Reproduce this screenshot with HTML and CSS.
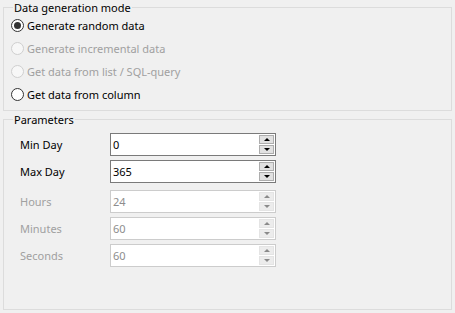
FILE: index.html
```html
<!DOCTYPE html>
<html>
<head>
<meta charset="utf-8">
<link rel="stylesheet" href="styles.css">
</head>
<body>
<div class="page">
  <fieldset class="group mode">
    <legend>Data generation mode</legend>
    <div class="radios">
      <label class="radio"><span class="dot checked"></span><span>Generate random data</span></label>
      <label class="radio disabled"><span class="dot"></span><span>Generate incremental data</span></label>
      <label class="radio disabled"><span class="dot"></span><span>Get data from list / SQL-query</span></label>
      <label class="radio"><span class="dot"></span><span>Get data from column</span></label>
    </div>
  </fieldset>
  <fieldset class="group params">
    <legend>Parameters</legend>
    <div class="rows">
      <div class="row"><span class="lbl">Min Day</span><div class="spin"><span class="val">0</span><div class="btns"><span class="btn up"></span><span class="btn down"></span></div></div></div>
      <div class="row"><span class="lbl">Max Day</span><div class="spin"><span class="val">365</span><div class="btns"><span class="btn up"></span><span class="btn down"></span></div></div></div>
      <div class="row disabled first-dis"><span class="lbl">Hours</span><div class="spin"><span class="val">24</span><div class="btns"><span class="btn up"></span><span class="btn down"></span></div></div></div>
      <div class="row disabled"><span class="lbl">Minutes</span><div class="spin"><span class="val">60</span><div class="btns"><span class="btn up"></span><span class="btn down"></span></div></div></div>
      <div class="row disabled"><span class="lbl">Seconds</span><div class="spin"><span class="val">60</span><div class="btns"><span class="btn up"></span><span class="btn down"></span></div></div></div>
    </div>
  </fieldset>
</div>
</body>
</html>
```
FILE: styles.css
```css
html, body {
  margin: 0;
  padding: 0;
  background: #f0f0f0;
}
body {
  font-family: "Noto Sans", "Open Sans", sans-serif;
  font-size: 11px;
  color: #000;
  width: 455px;
  height: 313px;
  overflow: hidden;
}
.page {
  padding: 0 3px 0 3px;
}
.group {
  margin: 0;
  padding: 0 0 0 7px;
  border: 1px solid #dcdcdc;
  min-width: 0;
}
.group legend {
  margin-left: 2px;
  padding: 0 1px;
  line-height: 15px;
  height: 15px;
}
.mode {
  height: 111px;
  box-sizing: border-box;
}
.params {
  margin-top: 1px;
  height: 198px;
  box-sizing: border-box;
}
.radios {
  display: flex;
  flex-direction: column;
  margin-top: -1px;
}
.radio {
  display: flex;
  align-items: center;
  height: 23px;
  gap: 3px;
}
.radio.disabled {
  color: #a0a0a0;
}
.dot {
  width: 13px;
  height: 13px;
  box-sizing: border-box;
  border: 1px solid #333;
  border-radius: 50%;
  background: #fff;
  display: flex;
  align-items: center;
  justify-content: center;
}
.dot.checked::after {
  content: "";
  width: 7px;
  height: 7px;
  border-radius: 50%;
  background: #333;
}
.radio.disabled .dot {
  border-color: #cfcfcf;
  background: #f7f7f7;
}
.rows {
  display: flex;
  flex-direction: column;
  gap: 4px;
  padding-top: 6px;
  padding-left: 9px;
}
.row {
  display: flex;
  align-items: center;
}
.row.first-dis {
  margin-top: 3px;
}
.lbl {
  width: 90px;
}
.row.disabled .lbl {
  color: #a0a0a0;
}
.spin {
  width: 166px;
  height: 23px;
  box-sizing: border-box;
  border: 1px solid #7a7a7a;
  background: #fff;
  display: flex;
  align-items: center;
  justify-content: space-between;
}
.row.disabled .spin {
  border-color: #cccccc;
}
.val {
  padding-left: 2px;
}
.row.disabled .val {
  color: #8d8d8d;
}
.btns {
  display: flex;
  flex-direction: column;
  gap: 1px;
  margin-right: 1px;
}
.btn {
  width: 15px;
  height: 9px;
  box-sizing: border-box;
  border: 1px solid #adadad;
  background: #e1e1e1;
  display: flex;
  align-items: center;
  justify-content: center;
}
.btn::after {
  content: "";
  width: 0;
  height: 0;
  border-left: 3px solid transparent;
  border-right: 3px solid transparent;
}
.btn.up::after {
  border-bottom: 3px solid #000;
}
.btn.down::after {
  border-top: 3px solid #000;
}
.row.disabled .btn {
  border-color: #e4e4e4;
  background: #ececec;
}
.row.disabled .btn.up::after {
  border-bottom-color: #8a8a8a;
}
.row.disabled .btn.down::after {
  border-top-color: #8a8a8a;
}
```
